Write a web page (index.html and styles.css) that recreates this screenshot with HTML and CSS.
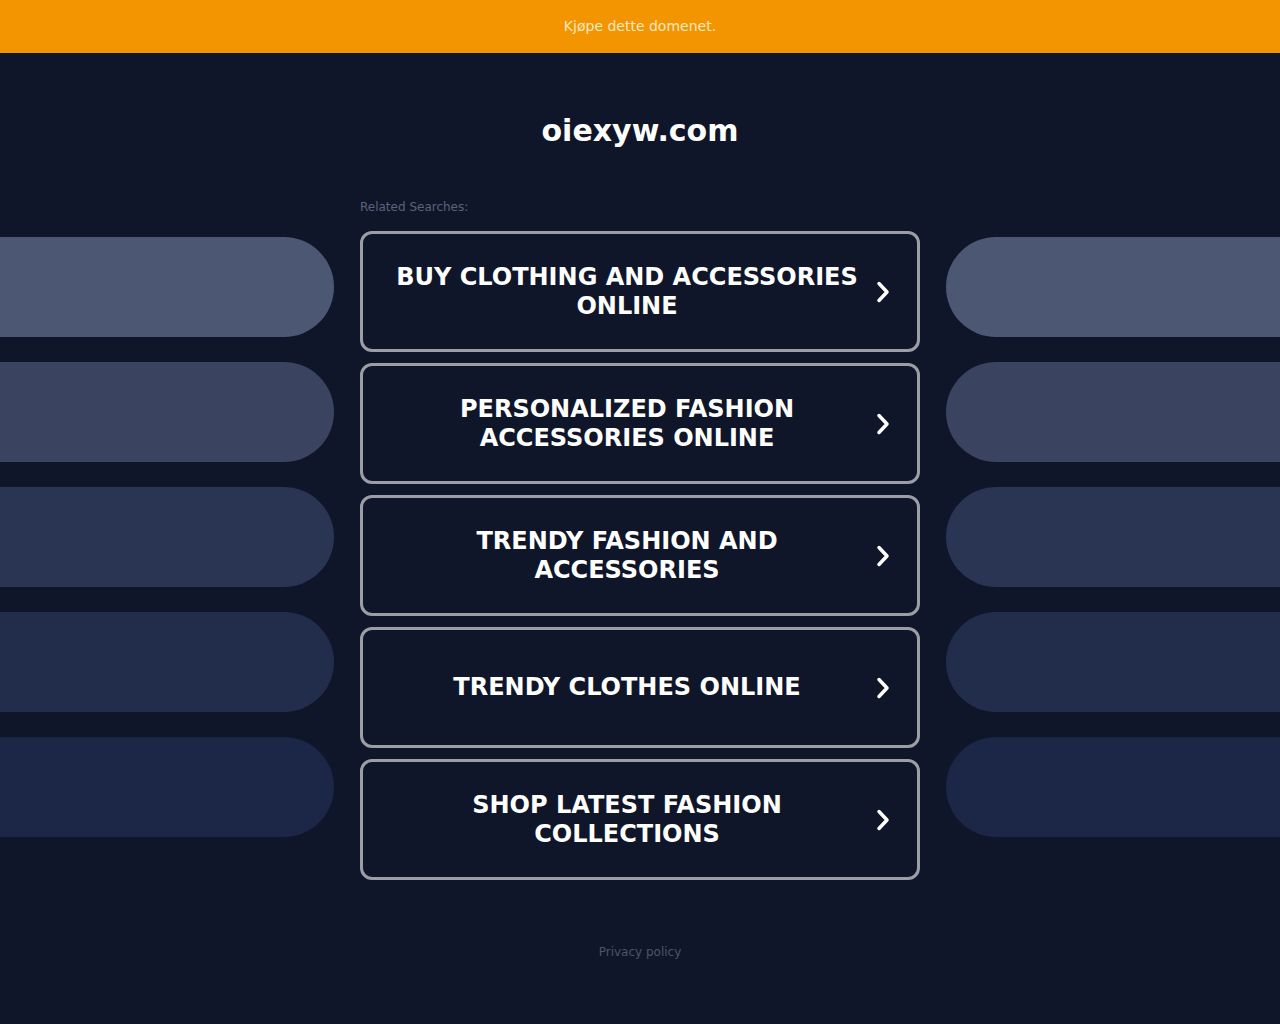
FILE: index.html
```html
<!DOCTYPE html>
<html lang="no">
<head>
<meta charset="utf-8">
<title>oiexyw.com</title>
<link rel="stylesheet" href="styles.css">
</head>
<body>
<header class="topbar"><a class="buy" href="#">Kjøpe dette domenet.</a></header>
<main class="page">
  <h1 class="title">oiexyw.com</h1>
  <div class="layout">
    <div class="side side-left">
      <div class="pill p1"></div><div class="pill p2"></div><div class="pill p3"></div><div class="pill p4"></div><div class="pill p5"></div>
    </div>
    <div class="center">
      <p class="label">Related Searches:</p>
      <div class="list">
        <a class="btn" href="#"><span class="btn-text">BUY CLOTHING AND ACCESSORIES ONLINE</span><svg class="chev" viewBox="0 0 20 26" width="20" height="26"><path d="M6 4.5 L14 13 L6 21.5"/></svg></a>
        <a class="btn" href="#"><span class="btn-text">PERSONALIZED FASHION ACCESSORIES ONLINE</span><svg class="chev" viewBox="0 0 20 26" width="20" height="26"><path d="M6 4.5 L14 13 L6 21.5"/></svg></a>
        <a class="btn" href="#"><span class="btn-text">TRENDY FASHION AND ACCESSORIES</span><svg class="chev" viewBox="0 0 20 26" width="20" height="26"><path d="M6 4.5 L14 13 L6 21.5"/></svg></a>
        <a class="btn" href="#"><span class="btn-text">TRENDY CLOTHES ONLINE</span><svg class="chev" viewBox="0 0 20 26" width="20" height="26"><path d="M6 4.5 L14 13 L6 21.5"/></svg></a>
        <a class="btn" href="#"><span class="btn-text">SHOP LATEST FASHION COLLECTIONS</span><svg class="chev" viewBox="0 0 20 26" width="20" height="26"><path d="M6 4.5 L14 13 L6 21.5"/></svg></a>
      </div>
    </div>
    <div class="side side-right">
      <div class="pill p1"></div><div class="pill p2"></div><div class="pill p3"></div><div class="pill p4"></div><div class="pill p5"></div>
    </div>
  </div>
</main>
<footer class="footer"><a class="privacy" href="#">Privacy policy</a></footer>
</body>
</html>
```
FILE: styles.css
```css
html, body {
  margin: 0;
  padding: 0;
}
body {
  background: #101629;
  font-family: "DejaVu Sans", "Liberation Sans", sans-serif;
  color: #fff;
  min-height: 1024px;
}
a { text-decoration: none; }

.topbar {
  box-sizing: border-box;
  height: 53px;
  padding-bottom: 2px;
  background: #f39500;
  display: flex;
  align-items: center;
  justify-content: center;
}
.buy {
  color: #fde7c2;
  font-size: 14px;
  line-height: 18px;
}

.page {
  display: flex;
  flex-direction: column;
}
.title {
  margin: 60px 0 0;
  text-align: center;
  font-size: 30px;
  line-height: 36px;
  font-weight: bold;
  color: #fff;
}

.layout {
  margin-top: 50px;
  display: grid;
  grid-template-columns: 1fr 560px 1fr;
  column-gap: 26px;
}
.side {
  display: flex;
  flex-direction: column;
  gap: 25px;
  padding-top: 38px;
}
.pill {
  height: 100px;
}
.side-left .pill { border-radius: 0 50px 50px 0; }
.side-right .pill { border-radius: 50px 0 0 50px; }
.p1 { background: #4c5774; }
.p2 { background: #3a4461; }
.p3 { background: #2a3453; }
.p4 { background: #222c4b; }
.p5 { background: #1c2646; }

.label {
  margin: 0 0 16px;
  font-size: 12px;
  line-height: 16px;
  color: #5a627e;
}
.list {
  display: flex;
  flex-direction: column;
  gap: 11px;
}
.btn {
  box-sizing: border-box;
  height: 121px;
  border: 3.5px solid #9c9ea5;
  border-radius: 12px;
  display: flex;
  align-items: center;
  padding: 0 24px 0 30px;
  gap: 12px;
  color: #fff;
}
.btn-text {
  flex: 1;
  text-align: center;
  font-size: 24px;
  line-height: 29px;
  font-weight: bold;
  letter-spacing: 0;
}
.chev {
  flex: none;
}
.chev path {
  fill: none;
  stroke: #fff;
  stroke-width: 3.5;
  stroke-linecap: round;
  stroke-linejoin: round;
}

.footer {
  margin-top: 61px;
  text-align: center;
}
.privacy {
  font-size: 12px;
  line-height: 16px;
  color: #4b536f;
}
```
